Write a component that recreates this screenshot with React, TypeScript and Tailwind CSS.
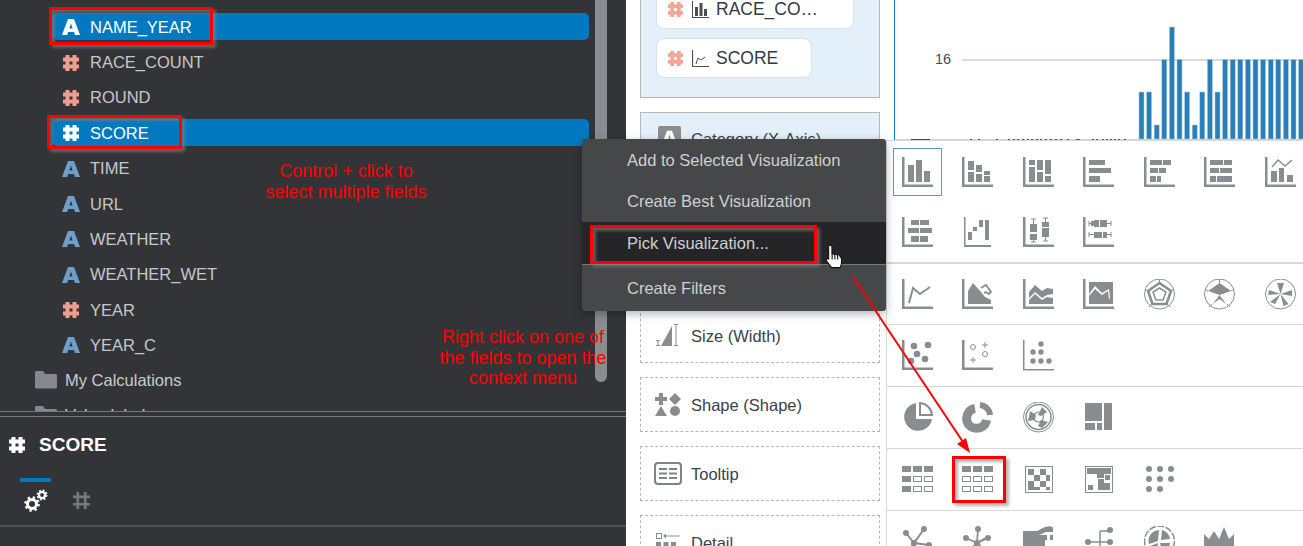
import type { ReactNode } from 'react'

const GREY = '#8a8d90'

function Rects({ r }: { r: number[][] }) {
  return (
    <>
      {r.map(([x, y, w, h], i) => (
        <rect key={i} x={x} y={y} width={w} height={h} />
      ))}
    </>
  )
}

function Dots({ d, r = 3 }: { d: number[][]; r?: number }) {
  return (
    <>
      {d.map(([x, y], i) => (
        <circle key={i} cx={x} cy={y} r={r} />
      ))}
    </>
  )
}

const Axis = () => <path d="M0 0h2.5v27.5H31V30H0z" />

function AIcon({ color, size = 18 }: { color: string; size?: number }) {
  return (
    <svg width={size} height={size} viewBox="0 0 18 18" className="shrink-0">
      <path fillRule="evenodd" fill={color} d="M6 1h6l6 16h-5l-1-3H6.200l-1 3H0zM9 5.500 7.400 10.500h3.200z" />
    </svg>
  )
}

function HashIcon({ color, size = 18, weight = 4 }: { color: string; size?: number; weight?: number }) {
  return (
    <svg width={size} height={size} viewBox="0 0 18 18" fill="none" stroke={color} strokeWidth={weight} className="shrink-0">
      <path d="M5.500 1v16M12.500 1v16M1 5.500h16M1 12.500h16" />
    </svg>
  )
}

function Gears() {
  return (
    <svg width="24" height="24" viewBox="0 0 24 24" fill="none" stroke="#fff">
      <circle cx="8" cy="15" r="4.500" strokeWidth="3" />
      <circle cx="8" cy="15" r="6.500" strokeWidth="2.500" strokeDasharray="2.300 2.800" />
      <circle cx="18" cy="6" r="3" strokeWidth="2.200" />
      <circle cx="18" cy="6" r="4.500" strokeWidth="2" strokeDasharray="1.800 1.750" />
    </svg>
  )
}

function GalleryIcon({ children }: { children: ReactNode }) {
  return (
    <svg width="31" height="31" viewBox="0 0 31 31" fill={GREY} stroke="none">
      {children}
    </svg>
  )
}

const row1: ReactNode[] = [
  <><Axis /><Rects r={[[6, 8, 6, 17], [14, 3, 6, 22], [22, 14, 6, 11]]} /></>,
  <><Axis /><Rects r={[[6, 4, 6, 9], [6, 15, 6, 10], [14, 8, 6, 7], [14, 17, 6, 8], [22, 14, 6, 4], [22, 19, 6, 6]]} /></>,
  <><Axis /><Rects r={[[6, 3, 6, 5], [6, 10, 6, 15], [14, 3, 6, 10], [14, 15, 6, 10], [22, 3, 6, 14], [22, 19, 6, 6]]} /></>,
  <><Axis /><Rects r={[[6, 3, 16, 5], [6, 11, 22, 5], [6, 19, 11, 6]]} /></>,
  <><Axis /><Rects r={[[6, 3, 12, 5], [19, 3, 8, 5], [6, 11, 8, 5], [15, 11, 7, 5], [6, 19, 6, 6], [13, 19, 4, 6]]} /></>,
  <><Axis /><Rects r={[[6, 3, 13, 5], [20, 3, 8, 5], [6, 11, 9, 5], [16, 11, 12, 5], [6, 19, 6, 6], [13, 19, 15, 6]]} /></>,
  <>
    <Axis />
    <Rects r={[[6, 14, 6, 11], [14, 11, 5, 14], [22, 18, 6, 7]]} />
    <path d="M7 10l6-7 7 6 7-6" fill="none" stroke={GREY} strokeWidth="1.500" />
  </>,
  <><Axis /><Rects r={[[9, 3, 8, 5], [18, 3, 9, 5], [6, 11, 11, 5], [18, 11, 12, 5], [9, 19, 8, 6], [18, 19, 8, 6]]} /></>,
  <><path d="M2 0h1.500v28H29v2H2z" /><Rects r={[[6, 15, 4, 8], [11, 10, 4, 4], [17, 3, 4, 7], [23, 3, 4, 20]]} /></>,
  <>
    <Axis />
    <Rects r={[[7, 7, 7, 8], [7, 17, 7, 6], [19, 5, 7, 5], [19, 11, 7, 9]]} />
    <path d="M8 2h5M10.500 2v5M8 25h5M10.500 23v2M20 1h5M22.500 1v4M20 24h5M22.500 20v4" fill="none" stroke={GREY} />
  </>,
  <>
    <Axis />
    <Rects r={[[8, 4, 3, 5], [11, 3, 5, 7], [17, 3, 7, 7], [11, 15, 8, 6], [20, 15, 4, 6]]} />
    <path d="M6 4v5M6 6.500h4M24 6.500h4M28 4v5M6 15v5M6 17.500h5M24 17.500h4M28 15v5" fill="none" stroke={GREY} />
  </>,
]

const row2: ReactNode[] = [
  <><Axis /><path d="M7 24l4-15 7 6 10-7" fill="none" stroke={GREY} strokeWidth="2" /></>,
  <>
    <Axis />
    <path d="M6 25V12l5-8 8 9 4 5 6 3v4z" />
    <path d="M19 9l5-3 5 7-2 2-3-2-2 1" fill="none" stroke={GREY} strokeWidth="1.800" />
  </>,
  <><Axis /><path d="M6 13l6-7 7 6 5-3 6 1v5l-6 1-5 3-7-6-6 6z" /><path d="M6 21l6-6 7 6 5-3 6 1v6H6z" /></>,
  <><Axis /><path fillRule="evenodd" d="M6 3h24v22H6zM6 15v2l6-7 7 6 6-4 1 8 1-1-1-9-7 4-7-7z" /></>,
  <>
    <circle cx="15.500" cy="15" r="15" fill="none" stroke={GREY} strokeWidth="1" />
    <path d="M15.500 4 27 12l-4.500 13h-14L4 12z" fill="none" stroke={GREY} strokeWidth="2.500" />
    <path d="M15.500 9 22 13l-3 8h-7l-3-8z" fill="none" stroke={GREY} strokeWidth="1.500" />
    <path d="M15.500 0v4M30 10l-3 2M26 28l-3-3M5 28l3-3M1 10l3 2" stroke={GREY} strokeWidth="1" />
  </>,
  <>
    <circle cx="15.500" cy="15" r="15" fill="none" stroke={GREY} strokeWidth="1" />
    <path d="M15.500 4 27 12 15.500 16 22 25l-6.500-5L9 25l6.500-9L4 12z" />
    <path d="M15.500 0v4M30 10l-3 2M26 28l-3-3M5 28l3-3M1 10l3 2" stroke={GREY} strokeWidth="1" />
  </>,
  <>
    <circle cx="15.500" cy="15" r="15" fill="none" stroke={GREY} strokeWidth="1" />
    <path d="M15.500 15 12 4h7zM15.500 15 27 11v6zM15.500 15l8 10-5 2zM15.500 15 10 25l-5-2zM15.500 15 3 16l1-5z" />
  </>,
]

const row3: ReactNode[] = [
  <><Axis /><Dots d={[[12, 6], [26, 5], [15, 14], [23, 19], [9, 21]]} r={3.300} /></>,
  <>
    <Axis />
    <circle cx="11" cy="7" r="2.500" fill="none" stroke={GREY} />
    <circle cx="23" cy="14" r="2.500" fill="none" stroke={GREY} />
    <path d="M20 5h6M23 2v6M8 20h6M11 17v6" fill="none" stroke={GREY} />
  </>,
  <><path d="M0 0h1.500v29H33v1.500H0z" /><Dots d={[[18, 4], [10, 12], [18, 12], [10, 21], [18, 21], [26, 21]]} r={2.700} /></>,
]

const row4: ReactNode[] = [
  <>
    <path d="M14 1A14 14 0 1 0 30 17H14z" />
    <path d="M18 1A13 13 0 0 1 30 13H18z" fill="none" stroke={GREY} strokeWidth="2" />
  </>,
  <>
    <path d="M13 6.500A10 10 0 1 0 24.500 18" fill="none" stroke={GREY} strokeWidth="9" />
    <path d="M18 3A11 11 0 0 1 28 13" fill="none" stroke={GREY} strokeWidth="6" />
  </>,
  <>
    <circle cx="15.500" cy="15" r="15" fill="none" stroke={GREY} strokeWidth="1" />
    <circle cx="15.500" cy="15" r="12.500" fill="none" stroke={GREY} strokeWidth="1.500" />
    <path d="M7 9l6 4-1 5-7 1zM19 5l5 5-6 4-3-1zM18 18l7 2-6 6-4-2z" />
    <circle cx="15.500" cy="15" r="5" fill="none" stroke={GREY} strokeWidth="1.200" />
  </>,
  <><Rects r={[[2, 1, 17, 18], [21, 1, 8, 27], [2, 21, 10, 7], [14, 21, 5, 7]]} /></>,
]

const row5: ReactNode[] = [
  <>
    <Rects r={[[0, 2, 9, 6], [11, 2, 9, 6], [22, 2, 9, 6], [0, 12, 9, 6], [0, 22, 9, 6]]} />
    <g fill="none" stroke={GREY}>
      <rect x="11.500" y="12.500" width="8" height="5" />
      <rect x="22.500" y="12.500" width="8" height="5" />
      <rect x="11.500" y="22.500" width="8" height="5" />
      <rect x="22.500" y="22.500" width="8" height="5" />
    </g>
  </>,
  <>
    <Rects r={[[0, 2, 9, 6], [11, 2, 9, 6], [22, 2, 9, 6]]} />
    <g fill="none" stroke={GREY}>
      {[0.500, 11.500, 22.500].map((x) => (
        <g key={x}>
          <rect x={x} y="12.500" width="8" height="5" />
          <rect x={x} y="22.500" width="8" height="5" />
        </g>
      ))}
    </g>
  </>,
  <>
    <rect x="2.500" y="2.500" width="27" height="26" fill="none" stroke={GREY} />
    <Rects r={[[5, 5, 6, 6], [17, 5, 6, 6], [11, 11, 6, 6], [23, 11, 4, 6], [5, 17, 6, 9], [17, 17, 6, 6], [11, 23, 6, 3], [23, 23, 4, 3]]} />
  </>,
  <>
    <rect x="2.500" y="2.500" width="27" height="26" fill="none" stroke={GREY} />
    <Rects r={[[4, 4, 24, 6], [14, 10, 7, 4], [22, 11, 5, 5], [5, 21, 5, 5], [15, 15, 6, 11], [21, 19, 6, 7]]} />
  </>,
  <Dots d={[[5, 5], [16, 5], [27, 5], [5, 15], [16, 15], [27, 15], [5, 25], [16, 25]]} />,
]

const row6: ReactNode[] = [
  <>
    <path d="M4 7l8 10L22 3M12 17l15 2M12 17 5 27M12 17l3 12" fill="none" stroke={GREY} strokeWidth="2" />
    <Dots d={[[4, 7], [22, 3], [12, 17], [27, 19], [5, 27]]} />
  </>,
  <>
    <path d="M16 3l-1 14M4 12l11 5 11-5M15 17 5 26M15 17l10 9M15 17 27 10" fill="none" stroke={GREY} strokeWidth="1.800" />
    <Dots d={[[16, 3], [4, 12], [26, 12], [15, 17], [5, 26], [25, 26]]} />
  </>,
  <>
    <path d="M0 5h14l8-4 6-1v6h-5l-7 3 8 0v5h-8l6 0v16H0z" />
    <Rects r={[[27, 1, 3, 5], [27, 9, 3, 5]]} />
  </>,
  <>
    <path d="M7 16h10M17 5v22M17 5h10M17 16h10" fill="none" stroke={GREY} strokeWidth="1.500" />
    <Dots d={[[5, 16], [27, 4], [27, 16]]} r={3} />
  </>,
  <>
    <circle cx="15.500" cy="15" r="15" fill="none" stroke={GREY} strokeWidth="1.500" strokeDasharray="7 1.500" />
    <path d="M15 4A11 11 0 0 0 5 18l9-3zM18 4a11 11 0 0 1 8 9l-9 1zM26 17a11 11 0 0 1-8 9l-2-9zM13 27a11 11 0 0 1-7-7l8-3z" />
  </>,
  <path d="M0 8l5 5 5-8 5 8 5-12 5 12 5-5v22H0z" />,
]

const galleryGroups = [
  { icons: row1, pad: 'pt-[1px] h-[123px] border-b-2' },
  { icons: row2, pad: 'h-[61px] border-b' },
  { icons: row3, pad: 'h-[62px] border-b' },
  { icons: row4, pad: 'h-[62px] border-b' },
  { icons: row5, pad: 'h-[62px] border-b' },
  { icons: row6, pad: 'h-[62px]' },
]

const fields = [
  { name: 'NAME_YEAR', kind: 'a', selected: true },
  { name: 'RACE_COUNT', kind: 'n' },
  { name: 'ROUND', kind: 'n' },
  { name: 'SCORE', kind: 'n', selected: true },
  { name: 'TIME', kind: 'a' },
  { name: 'URL', kind: 'a' },
  { name: 'WEATHER', kind: 'a' },
  { name: 'WEATHER_WET', kind: 'a' },
  { name: 'YEAR', kind: 'n' },
  { name: 'YEAR_C', kind: 'a' },
]

function FolderRow({ label }: { label: string }) {
  return (
    <div className="flex h-[35.35px] items-center pl-[35px] text-[16.500px] text-[#c8ccd0]">
      <svg width="22" height="18" viewBox="0 0 22 18" fill="#85888c" className="shrink-0">
        <path d="M0 1.500C0 .7.700 0 1.500 0H8l2 3h10.500c.8 0 1.500.7 1.500 1.500V16c0 .8-.7 1.500-1.500 1.500h-19C.7 17.500 0 16.800 0 16z" />
      </svg>
      <span className="ml-[8px]">{label}</span>
    </div>
  )
}

function DataPanel() {
  return (
    <aside className="flex w-[626px] shrink-0 flex-col bg-[#333437]">
      <div className="flex h-[411px] overflow-hidden">
        <div className="flex-1 pt-[9px]">
          {fields.map((f) => (
            <div key={f.name} className="flex h-[35.35px] items-center">
              <div
                className={`ml-[52px] flex h-[27px] w-[537px] items-center rounded-[5px] pl-[10px] pt-[1px] text-[16.500px] ${
                  f.selected ? 'bg-[#0079c1] text-white' : 'text-[#c6c8ca]'
                }`}
              >
                {f.kind === 'a' ? (
                  <AIcon color={f.selected ? '#fff' : '#6d9fcb'} />
                ) : (
                  <HashIcon color={f.selected ? '#fff' : '#ef9d90'} />
                )}
                <span className="ml-[10px]">{f.name}</span>
              </div>
            </div>
          ))}
          <FolderRow label="My Calculations" />
          <FolderRow label="Value labels" />
        </div>
        <div className="mr-[19px] h-[382px] w-[12px] rounded-b-[6px] bg-[#898d91]" />
      </div>
      <div className="h-px bg-[#78797b]" />
      <div className="mt-[4px] h-px bg-[#78797b]" />
      <div className="flex h-[56px] items-center pl-[8px] text-[19px] font-bold text-white">
        <HashIcon color="#fff" />
        <span className="ml-[13px]">SCORE</span>
      </div>
      <div className="mt-[5px] flex h-[49px] gap-[21px] border-b-2 border-[#4f5053] pl-[20px]">
        <div className="flex w-[31px] flex-col items-center">
          <div className="h-[4px] w-full bg-[#0079c1]" />
          <div className="mt-[7px]">
            <Gears />
          </div>
        </div>
        <div className="pt-[13px]">
          <HashIcon color="#77797c" size={19} weight={2.500} />
        </div>
      </div>
    </aside>
  )
}

function Pill({ label, width, icon }: { label: string; width: string; icon: ReactNode }) {
  return (
    <div className={`flex h-[40px] shrink-0 items-center rounded-[8px] border border-[#d6e0ea] bg-white pl-[10px] text-[17.500px] text-[#333a42] ${width}`}>
      <HashIcon color="#f6a598" size={17} />
      <span className="ml-[8px]">{icon}</span>
      <span className="ml-[7px]">{label}</span>
    </div>
  )
}

function DashedSlot({ label, icon }: { label: string; icon: ReactNode }) {
  return (
    <div className="flex h-[55px] shrink-0 items-center border border-dashed border-[#b4b6b8] text-[16.500px] text-[#3a4149]">
      <div className="flex w-[50px] shrink-0 justify-center pl-[3px]">{icon}</div>
      <span className="pt-[1px]">{label}</span>
    </div>
  )
}

function ConfigColumn() {
  return (
    <div className="flex h-[546px] w-[260px] shrink-0 flex-col gap-[14px] overflow-hidden bg-white pl-[14px] pr-[6px]">
      <div className="flex h-[98px] shrink-0 flex-col justify-end gap-[9px] overflow-hidden border-x border-b border-[#b4b8bc] bg-[#e3eff9] pb-[19px] pl-[15px]">
        <Pill
          label="RACE_CO…"
          width="w-[198px]"
          icon={
            <svg width="17" height="17" viewBox="0 0 17 17" fill="#4a4f55" className="block">
              <path d="M0 0h1v16h17v1H0zM3 6h3v9H3zM7.500 2h3v13h-3zM12 8h3v7h-3z" />
            </svg>
          }
        />
        <Pill
          label="SCORE"
          width="w-[156px]"
          icon={
            <svg width="17" height="17" viewBox="0 0 17 17" fill="none" stroke="#4a4f55" className="block">
              <path d="M.5 0v16.500H17" strokeWidth="1.200" />
              <path d="M4 14l2-6 3 2 4-3" />
            </svg>
          }
        />
      </div>
      <div className="flex h-[182px] shrink-0 items-start border border-[#b4b8bc] bg-[#e3eff9] pl-[17px] pt-[13px] text-[16.500px] text-[#3a4149]">
        <div className="flex h-[22px] w-[23px] shrink-0 items-center justify-center rounded-[2px] bg-[#8a8d90]">
          <AIcon color="#fff" size={15} />
        </div>
        <span className="ml-[10px] leading-[26px]">Category (X-Axis)</span>
      </div>
      <DashedSlot
        label="Size (Width)"
        icon={
          <svg width="24" height="23" viewBox="0 0 24 23" fill={GREY} className="block">
            <path d="M5 22 16 2v20zM0 16h4v1H2.500v4H4v1H0v-1h1.500v-4H0zM18 0h4v1h-1.500v20H22v1h-4v-1h1.500V1H18z" />
          </svg>
        }
      />
      <DashedSlot
        label="Shape (Shape)"
        icon={
          <svg width="26" height="24" viewBox="0 0 26 24" fill={GREY} className="block">
            <path d="M4 0h4v4h4v4H8v4H4V8H0V4h4zM20 0l6 6-6 6-6-6zM6 13l6 10H0z" />
            <circle cx="20" cy="18" r="5" />
          </svg>
        }
      />
      <DashedSlot
        label="Tooltip"
        icon={
          <svg width="28" height="23" viewBox="0 0 28 23" fill="none" stroke="#7f8286" className="block">
            <rect x="1" y="1" width="26" height="21" rx="3" strokeWidth="2" />
            <path d="M5 7h8M15 7h8M5 11.500h8M15 11.500h8M5 16h8M15 16h8" strokeWidth="1.800" />
          </svg>
        }
      />
      <DashedSlot
        label="Detail"
        icon={
          <svg width="24" height="20" viewBox="0 0 24 20" fill={GREY} className="block">
            <rect x=".5" y=".5" width="5" height="5" fill="none" stroke={GREY} />
            <path d="M7 3l3-2.500v2h13.500v1H10v2z" />
            <path d="M0 9h5v5H0zM7.500 9h5v5h-5zM15 9h5v5h-5z" />
          </svg>
        }
      />
    </div>
  )
}

const barTops = [92, 92, 125, 59.500, 27, 59.500, 92, 125, 92, 59.500, 92, ...Array(11).fill(59.500)]
const specks = [970, 978, 996, 1008, 1013, 1017, 1022, 1027, 1031, 1036, 1040, 1045, 1050, 1055, 1060, 1067, 1076, 1078, 1092, 1096, 1102, 1106, 1110, 1114, 1118, 1124]

function ChartArea() {
  return (
    <div className="h-[140px] shrink-0 bg-white">
      <svg width="417" height="140" viewBox="886 0 417 140" className="block">
        <rect x="894" y="0" width="1" height="140" fill="#0f7cc0" />
        <rect x="962" y="59" width="341" height="2" fill="#d7dce0" />
        <rect x="895" y="139" width="408" height="1" fill="#cfd3d6" />
        {barTops.map((top, i) => (
          <rect
            key={i}
            x={1139 + i * 7.600}
            y={top}
            width="5"
            height={139 - top}
            fill="#2a7fb8"
            stroke="#a9cbe2"
            strokeWidth="0.500"
          />
        ))}
        {specks.map((x) => (
          <rect key={x} x={x} y="139" width="2" height="1" fill="#555" />
        ))}
        <rect x="911" y="139" width="19" height="1" fill="#444" />
        <text x="935" y="64" fontSize="14.500" fill="#454a50">
          16
        </text>
      </svg>
    </div>
  )
}

function Gallery() {
  return (
    <div className="min-h-0 flex-1 overflow-hidden border-l border-t border-[#d8d8d8] bg-white">
      {galleryGroups.map((group, g) => (
        <div key={g} className={`grid grid-cols-[repeat(7,60.500px)] auto-rows-[60px] border-[#d8d8d8] ${group.pad}`}>
          {group.icons.map((icon, i) => (
            <div key={i} className="flex items-center justify-center">
              <div
                className={`flex h-[48px] w-[49px] items-center justify-center border ${
                  g === 0 && i === 0 ? 'border-[#5b9ac9]' : 'border-transparent'
                }`}
              >
                <GalleryIcon>{icon}</GalleryIcon>
              </div>
            </div>
          ))}
        </div>
      ))}
    </div>
  )
}

function ContextMenu() {
  const item = 'flex items-center pl-[45px] text-[16.500px] text-[#cfd0d1]'
  return (
    <div className="absolute left-[582px] top-[139px] w-[304px] overflow-hidden rounded-[3px] bg-[#464749] shadow-[0_3px_10px_rgba(0,0,0,0.3)]">
      <div className={`${item} h-[42px]`}>Add to Selected Visualization</div>
      <div className={`${item} h-[41px]`}>Create Best Visualization</div>
      <div className={`${item} h-[42px] bg-[#252528]`}>Pick Visualization...</div>
      <div className="h-px bg-[#77787a]" />
      <div className={`${item} h-[46px]`}>Create Filters</div>
    </div>
  )
}

function Annotations() {
  const box =
    'absolute border-[3.500px] border-[#ff0000] shadow-[3px_3px_3px_rgba(130,130,130,0.6),inset_3px_3px_3px_rgba(130,130,130,0.6)]'
  const note = 'absolute -translate-x-1/2 whitespace-nowrap text-center text-[18px] leading-[20.700px] text-[#ff0000]'
  return (
    <>
      <div className={`${box} left-[49px] top-[7px] h-[38px] w-[164px]`} />
      <div className={`${box} left-[47px] top-[115px] h-[34px] w-[135px]`} />
      <div className={`${box} left-[590px] top-[225px] h-[39px] w-[227px]`} />
      <div className={`${box} left-[952px] top-[456px] h-[47px] w-[54px]`} />
      <div className={`${note} left-[346px] top-[161px]`}>
        Control + click to
        <br />
        select multiple fields
      </div>
      <div className={`${note} left-[523px] top-[327px]`}>
        Right click on one of
        <br />
        the fields to open the
        <br />
        context menu
      </div>
      <svg width="1303" height="546" viewBox="0 0 1303 546" className="pointer-events-none absolute left-0 top-0">
        <path d="M853 277 965 445" stroke="#ff0000" strokeWidth="2" fill="none" />
        <path d="M970 453 957 444 966 438z" fill="#ff0000" />
        <g transform="translate(825 244) scale(1.100)" stroke="#111" strokeWidth="1" strokeLinejoin="round">
          <path
            fill="#fff"
            d="M4.500 1C5.600 1 6.300 1.800 6.300 2.800V9.500C6.900 8.900 8.100 8.900 8.700 9.600 9.300 9 10.600 9.100 11.100 9.900 11.800 9.400 13.200 9.800 13.500 11L15 13V17C15 19 14.200 20.300 13.600 21.500H6L1.500 15.500C.7 14.300 2.100 12.700 3.300 13.700V2.800C3.300 1.800 3.700 1 4.500 1Z"
          />
          <path d="M6.500 10v4M9 10v4M11.500 10v4" fill="none" />
        </g>
      </svg>
    </>
  )
}

export default function App() {
  return (
    <div className="relative flex h-[546px] w-[1303px] overflow-hidden bg-white font-['Liberation_Sans',Arial,sans-serif]">
      <DataPanel />
      <ConfigColumn />
      <div className="flex min-w-0 flex-1 flex-col">
        <ChartArea />
        <Gallery />
      </div>
      <ContextMenu />
      <Annotations />
    </div>
  )
}
